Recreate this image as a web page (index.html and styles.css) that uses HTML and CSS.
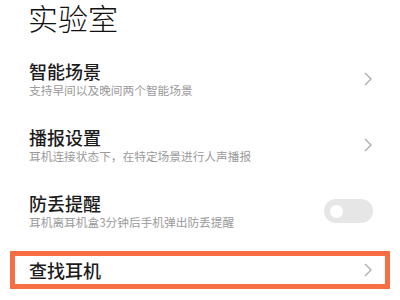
FILE: index.html
```html
<!DOCTYPE html>
<html lang="zh-CN">
<head>
<meta charset="utf-8">
<link rel="stylesheet" href="styles.css">
</head>
<body>
<div class="page">
  <h1 class="page-title">实验室</h1>
  <div class="row">
    <div class="text">
      <div class="title">智能场景</div>
      <div class="sub">支持早间以及晚间两个智能场景</div>
    </div>
    <svg class="chev" viewBox="0 0 8 14" width="8" height="14"><polyline points="1,1 7,7 1,13" /></svg>
  </div>
  <div class="row">
    <div class="text">
      <div class="title">播报设置</div>
      <div class="sub">耳机连接状态下，在特定场景进行人声播报</div>
    </div>
    <svg class="chev" viewBox="0 0 8 14" width="8" height="14"><polyline points="1,1 7,7 1,13" /></svg>
  </div>
  <div class="row">
    <div class="text">
      <div class="title">防丢提醒</div>
      <div class="sub">耳机离耳机盒3分钟后手机弹出防丢提醒</div>
    </div>
    <div class="toggle"><span class="knob"></span></div>
  </div>
  <div class="find">
    <div class="title">查找耳机</div>
    <svg class="chev" viewBox="0 0 8 14" width="8" height="14"><polyline points="1,1 7,7 1,13" /></svg>
  </div>
</div>
</body>
</html>
```

FILE: styles.css
```css
html, body {
  margin: 0;
  padding: 0;
  background: #ffffff;
}
body {
  font-family: "Noto Sans CJK SC", "Noto Sans", sans-serif;
  width: 400px;
  height: 300px;
  overflow: hidden;
}
.page {
  display: flex;
  flex-direction: column;
}
.page-title {
  margin: 0;
  height: 46px;
  padding-left: 28px;
  font-size: 30px;
  line-height: 34px;
  font-weight: 300;
  color: #111;
}
.row {
  height: 66px;
  display: flex;
  align-items: center;
  justify-content: space-between;
  padding: 0 28px 0 29px;
}
.text {
  display: flex;
  flex-direction: column;
}
.title {
  font-size: 18px;
  line-height: 20px;
  font-weight: 500;
  color: #1c1c1c;
}
.sub {
  margin-top: 1.5px;
  font-size: 11.7px;
  line-height: 14px;
  color: #9a9a9a;
}
.chev {
  display: block;
  width: 8px;
  height: 14px;
}
.chev polyline {
  fill: none;
  stroke: #ababab;
  stroke-width: 1.3;
}
.toggle {
  position: relative;
  width: 49px;
  height: 24px;
  border-radius: 12px;
  background: #e6e6e6;
  margin-right: -1px;
}
.knob {
  position: absolute;
  left: 6px;
  top: 5.5px;
  width: 13px;
  height: 13px;
  border-radius: 50%;
  background: #ffffff;
}
.find {
  margin: 7px 10px 0 10px;
  height: 28px;
  border: 5px solid #f96d43;
  display: flex;
  align-items: center;
  justify-content: space-between;
  padding: 0 13px 0 14px;
}
```
